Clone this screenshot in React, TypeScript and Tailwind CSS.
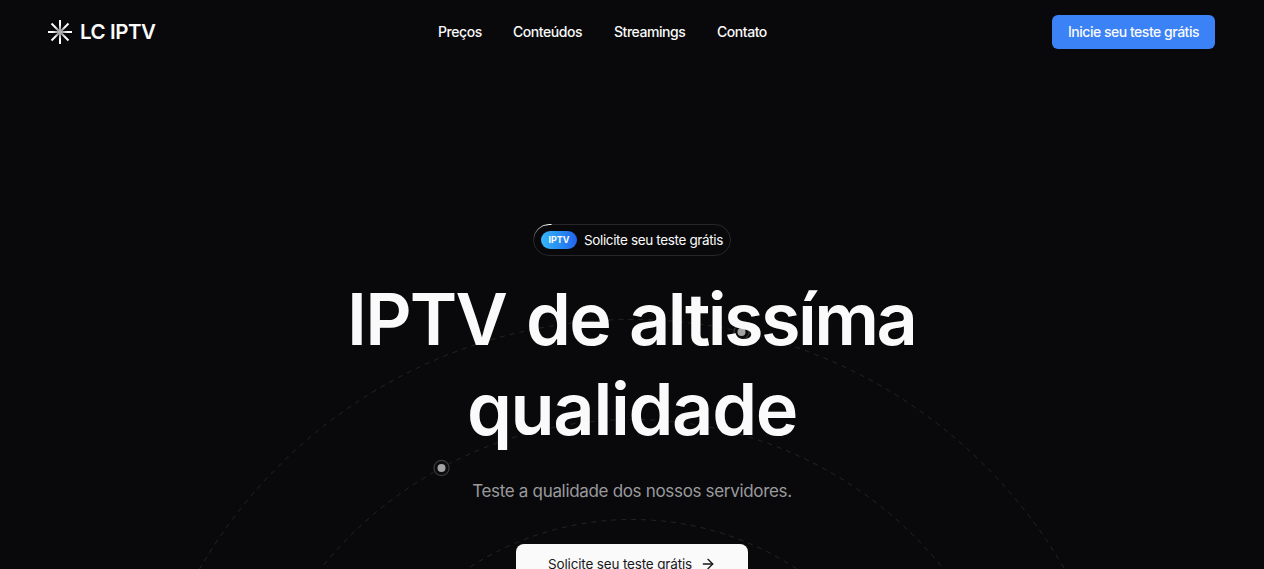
import { ArrowRight } from 'lucide-react';

const links = [
  { label: 'Preços', width: 'w-[43px]' },
  { label: 'Conteúdos', width: 'w-[69px]' },
  { label: 'Streamings', width: 'w-[71px]' },
  { label: 'Contato', width: 'w-[51px]' },
];

const rays = [0, 45, 90, 135, 180, 225, 270, 315];

function Logo() {
  return (
    <svg viewBox="0 0 24 24" className="size-6 shrink-0">
      <defs>
        <linearGradient id="ray" gradientUnits="userSpaceOnUse" x1="12" y1="12" x2="12" y2="0">
          <stop offset="0" stopColor="#fff" stopOpacity="0.35" />
          <stop offset="0.6" stopColor="#fff" />
        </linearGradient>
      </defs>
      {rays.map((angle) => (
        <rect key={angle} x="11" y="0" width="2" height="11.6" fill="url(#ray)" transform={`rotate(${angle} 12 12)`} />
      ))}
    </svg>
  );
}

function Orbits() {
  return (
    <svg viewBox="0 0 1264 569" className="pointer-events-none absolute inset-0 h-full w-full" fill="none">
      {[299.5, 399.5, 499.5].map((r) => (
        <circle key={r} cx="632" cy="819" r={r} stroke="#fff" strokeOpacity="0.105" strokeDasharray="5 5" />
      ))}
      {[[441.5, 468], [741.5, 332]].map(([x, y]) => (
        <g key={x}>
          <circle cx={x} cy={y} r="7.6" fill="#0c0c0e" stroke="#3a3a3c" strokeWidth="1.2" />
          <circle cx={x} cy={y} r="4" fill="#a3a3a3" />
        </g>
      ))}
    </svg>
  );
}

export default function App() {
  return (
    <div className="relative h-[569px] w-full overflow-hidden bg-[#09090b] font-['Inter',sans-serif] text-[#fafafa]">
      <Orbits />
      <header className="relative flex h-16 items-center justify-between pr-[49px] pl-12">
        <a className="flex w-[340px] items-center gap-2">
          <Logo />
          <span className="text-[20.5px] font-semibold tracking-[-0.45px] whitespace-nowrap">LC IPTV</span>
        </a>
        <nav className="absolute left-1/2 flex -translate-x-[194px] gap-8 text-sm font-medium tracking-[-0.45px]">
          {links.map((link) => (
            <a key={link.label} className={`${link.width} whitespace-nowrap`}>{link.label}</a>
          ))}
        </nav>
        <button className="flex h-[34px] w-[163px] items-center justify-center rounded-md bg-[#3b82f6] text-sm font-medium tracking-[-0.48px] whitespace-nowrap">
          Inicie seu teste grátis
        </button>
      </header>

      <main className="relative flex flex-col items-center pt-40">
        <div className="relative flex h-8 w-[198px] items-center gap-[7px] rounded-full border border-[#27272a] pl-[7px]">
          <svg viewBox="0 0 198 32" className="absolute -top-px -left-px h-8 w-[198px]" fill="none">
            <defs>
              <linearGradient id="shine" gradientUnits="userSpaceOnUse" x1="1" y1="16" x2="17" y2="1">
                <stop offset="0" stopColor="#fff" stopOpacity="0" />
                <stop offset="1" stopColor="#fff" />
              </linearGradient>
            </defs>
            <path d="M.5 16A15.5 15.5 0 0 1 16 .5h2.5" stroke="url(#shine)" />
          </svg>
          <span className="flex h-[18px] w-9 items-center justify-center rounded-full bg-linear-to-r from-[#38b6f8] to-[#2563eb] text-[9px] font-bold">
            IPTV
          </span>
          <span className="text-[13.5px] tracking-[-0.36px] whitespace-nowrap">Solicite seu teste grátis</span>
        </div>

        <h1 className="mt-[18px] flex flex-col items-center text-[72px] leading-[90px] font-semibold">
          <span className="flex justify-center whitespace-nowrap">
            <span className="w-[179px] tracking-[-1.8px]">IPTV </span>
            <span className="w-[103px] tracking-[-1.6px]">de </span>
            <span className="w-[288px] tracking-[-2.6px]">altissíma</span>
          </span>
          <span className="tracking-[-1.3px]">qualidade</span>
        </h1>

        <p className="mt-[23px] text-[17px] leading-7 tracking-[-0.32px] whitespace-nowrap text-[#9a9a9d]">
          Teste a qualidade dos nossos servidores.
        </p>

        <button className="mt-[39px] flex h-10 w-[232px] items-center gap-2 rounded-lg bg-[#fafafa] pl-8 text-[#18181b]">
          <span className="w-36 text-left text-[13.5px] tracking-[-0.16px] whitespace-nowrap">Solicite seu teste grátis</span>
          <ArrowRight className="size-4" />
        </button>
      </main>
    </div>
  );
}
